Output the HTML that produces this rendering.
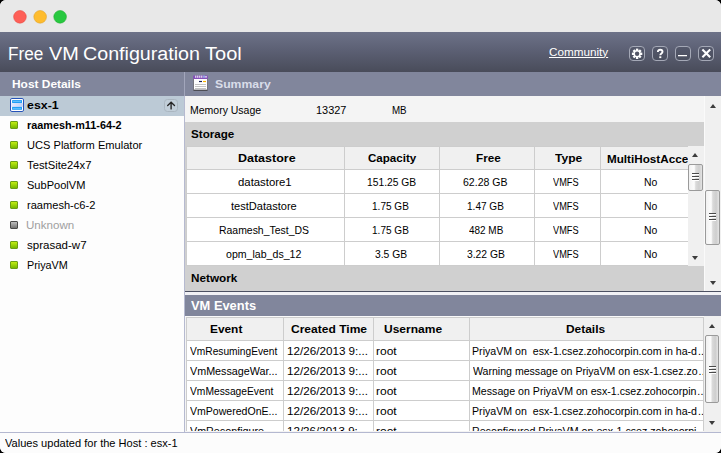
<!DOCTYPE html>
<html>
<head>
<meta charset="utf-8">
<title>Free VM Configuration Tool</title>
<style>
*{box-sizing:border-box;margin:0;padding:0}
html,body{width:721px;height:453px;overflow:hidden;background:#000;font-family:"Liberation Sans",sans-serif;font-size:11px;color:#000}
#win{position:absolute;left:0;top:0;width:721px;height:453px;background:#fdfdfd;border-radius:6px;overflow:hidden}
#win div,#win i,#win svg{position:absolute;display:block}
.t{position:absolute;white-space:pre;transform-origin:0 0;line-height:14px;height:14px}
.tl{top:10.4px;width:13px;height:13px;border-radius:50%}
#hdr{left:0;top:32px;width:721px;height:40px;background:linear-gradient(#6d7288,#5c6074 45%,#494c5a)}
.hb{top:14px;width:16px;height:15px;border:1px solid #a4a8b6;border-radius:4px;background:rgba(40,42,56,.18)}
.dot{left:10px;width:8px;height:8px;border:1px solid #6c9e14;background:linear-gradient(#c2ec14,#a0d608 45%,#76b600);border-radius:1px}
.dot.g{border-color:#4a4a4a;background:linear-gradient(#bebebe,#747474)}
.hl{height:1px;background:#cdcdcd}
.vl{width:1px;background:#cdcdcd}
.sb{background:#f0f0f0}
.thumb{border:1px solid #9a9a9a;border-radius:2px;background:linear-gradient(90deg,#f1f1f1 0,#fcfcfc 40%,#dadada 52%,#cecece 78%,#e4e4e4 100%)}
.grip{left:3px;width:7px;height:1.3px;background:#4a4a4a;box-shadow:0 1px 0 #fff}
.arr{width:0;height:0;border-left:3.7px solid transparent;border-right:3.7px solid transparent}
.arr.up{border-bottom:4px solid #3c3c3c}
.arr.dn{border-top:4px solid #3c3c3c}
</style>
</head>
<body>
<div id="win">
  <div style="left:0;top:0;width:721px;height:32px;background:#e8e8e8">
    <svg width="80" height="32" viewBox="0 0 80 32" style="left:0;top:0"><circle cx="19.95" cy="16.85" r="6.3" fill="#fe5f57" stroke="#e5483f" stroke-width=".6"/><circle cx="40.15" cy="16.85" r="6.3" fill="#febc2e" stroke="#e0a227" stroke-width=".6"/><circle cx="60.1" cy="16.85" r="6.3" fill="#28c840" stroke="#1eae2e" stroke-width=".6"/></svg>
  </div>
  <div id="hdr">
    <div class="hb" style="left:629px"><svg width="14" height="13" viewBox="0 0 14 13" style="left:0;top:0"><g transform="translate(7.1,6.8)" fill="#fff"><circle r="3.5"/><g id="teeth"><rect x="-1.2" y="-5.2" width="2.4" height="10.4"/><rect x="-1.2" y="-5.2" width="2.4" height="10.4" transform="rotate(45)"/><rect x="-1.2" y="-5.2" width="2.4" height="10.4" transform="rotate(90)"/><rect x="-1.2" y="-5.2" width="2.4" height="10.4" transform="rotate(135)"/></g><circle r="2.2" fill="#525566"/></g></svg></div>
    <div class="hb" style="left:652px"><svg width="14" height="13" viewBox="0 0 14 13" style="left:0;top:0"><path d="M4.9 4.9 C4.9 3.3 5.9 2.8 7.2 2.8 C8.6 2.8 9.5 3.6 9.5 4.8 C9.5 6.5 7.3 6.5 7.3 8.3" stroke="#fff" stroke-width="1.9" fill="none"/><rect x="6.3" y="9.3" width="2" height="1.8" fill="#fff"/></svg></div>
    <div class="hb" style="left:675px"><div style="left:1.8px;top:7.6px;width:9px;height:1.8px;background:#fff;box-shadow:0 1px 0 rgba(255,255,255,.25)"></div></div>
    <div class="hb" style="left:698px"><svg width="14" height="13" viewBox="0 0 14 13" style="left:0;top:0"><path d="M3.4 2.5 L11.2 10.3 M11.2 2.5 L3.4 10.3" stroke="#fff" stroke-width="2.1" fill="none"/></svg></div>
  </div>
  <div style="left:0;top:72px;width:721px;height:24px;background:#81869c"></div>
  <div style="left:184px;top:72px;width:1px;height:24px;background:#a2a6bb"></div>
  <svg width="15" height="16" viewBox="0 0 15 16" style="left:193px;top:75px">
    <rect x="0.5" y="3.5" width="14" height="11.5" fill="#fff" stroke="#77777f" stroke-width="1"/>
    <rect x="0.5" y="15" width="14" height="1" fill="#4c4c54"/>
    <rect x="0" y="0.6" width="15" height="3.4" rx="1" fill="#8450b8"/>
    <g fill="#fff"><rect x="2.3" y="0.6" width="1" height="2.2"/><rect x="4.3" y="0.6" width="1" height="2.2"/><rect x="6.3" y="0.6" width="1" height="2.2"/><rect x="8.3" y="0.6" width="1" height="2.2"/><rect x="10.3" y="0.6" width="1.4" height="2.2" fill="#9fc8ff"/><rect x="12" y="1.4" width="2" height="1" /></g>
    <rect x="6" y="5.9" width="3" height="1.2" fill="#1c2458"/><rect x="10" y="5.9" width="3" height="1.2" fill="#f8b400"/>
    <rect x="2" y="9" width="11" height="1" fill="#c4c4c4"/><rect x="2" y="11" width="11" height="1" fill="#c4c4c4"/><rect x="2" y="13" width="11" height="1" fill="#c4c4c4"/>
  </svg>
  <!-- left -->
  <div style="left:0;top:96px;width:184px;height:20px;background:#bccad6"></div>
  <svg width="14" height="14" viewBox="0 0 14 14" style="left:10px;top:98px">
    <defs><linearGradient id="eg" x1="0" y1="0" x2="1" y2="0"><stop offset="0" stop-color="#e6eafe"/><stop offset="1" stop-color="#bfd1f8"/></linearGradient></defs>
    <rect x="0.5" y="0.5" width="13" height="13" rx="1.4" fill="#fff" stroke="#2552b8"/>
    <rect x="1.3" y="4.9" width="11.4" height="4.1" fill="url(#eg)"/>
    <rect x="2.1" y="2.1" width="9.9" height="2.9" fill="#1f9ef5"/><rect x="3" y="3.15" width="8" height="0.8" fill="#70c6ff"/>
    <rect x="2.1" y="8.9" width="9.9" height="2.9" fill="#1f9ef5"/><rect x="3" y="9.95" width="8" height="0.8" fill="#70c6ff"/>
  </svg>
  <div style="left:164px;top:99px;width:14px;height:13px;border:1px solid #aab6c0;border-radius:3.5px;background:#c1ced9"></div>
  <svg width="14" height="13" viewBox="0 0 14 13" style="left:164px;top:99px"><path d="M7.1 3.6 V9.9 M3.7 6.5 L7.1 3.3 L10.5 6.5" stroke="#242424" stroke-width="1.35" fill="none" stroke-linecap="round" stroke-linejoin="miter"/></svg>
  <i class="dot" style="top:121px"></i><i class="dot" style="top:141px"></i><i class="dot" style="top:161px"></i><i class="dot" style="top:181px"></i><i class="dot" style="top:201px"></i><i class="dot g" style="top:221px"></i><i class="dot" style="top:241px"></i><i class="dot" style="top:261px"></i>
  <!-- right -->
  <div style="left:185px;top:96px;width:536px;height:336px;background:#f4f4f4"></div>
  <div style="left:184px;top:96px;width:1px;height:336px;background:#b6bad0"></div>
  <div style="left:185px;top:122px;width:519px;height:24px;background:#d0d0d0"></div>
  <div style="left:185px;top:266px;width:519px;height:25px;background:#d0d0d0"></div>
  <div style="left:185px;top:146px;width:2px;height:120px;background:#d0d0d0"></div>
  <!-- table 1 -->
  <div style="left:186px;top:146px;width:502px;height:120px;background:#fff;overflow:hidden">
    <div style="left:0;top:0;width:502px;height:23px;background:#f0f0f0"></div>
    <div class="hl" style="left:0;top:0;width:502px"></div>
    <div class="hl" style="left:0;top:23px;width:502px"></div><div class="hl" style="left:0;top:47px;width:502px"></div><div class="hl" style="left:0;top:71px;width:502px"></div><div class="hl" style="left:0;top:95px;width:502px"></div><div class="hl" style="left:0;top:119px;width:502px"></div>
    <div class="vl" style="left:0;top:0;height:120px"></div><div class="vl" style="left:158px;top:0;height:120px"></div><div class="vl" style="left:253px;top:0;height:120px"></div><div class="vl" style="left:348px;top:0;height:120px"></div><div class="vl" style="left:414px;top:0;height:120px"></div>
    <span class="t" style="left:420.6px;top:5.5px;font-weight:bold;transform:scaleX(1.062)">MultiHostAccess</span>
  </div>
  <div class="sb" style="left:688px;top:146px;width:16px;height:120px">
    <i class="arr up" style="left:4px;top:7px"></i>
    <div class="thumb" style="left:0;top:18px;width:14.5px;height:26.5px"><i class="grip" style="top:8px"></i><i class="grip" style="top:11px"></i><i class="grip" style="top:14px"></i></div>
    <i class="arr dn" style="left:4px;top:110px"></i>
  </div>
  <div class="sb" style="left:704px;top:96px;width:17px;height:195px">
    <i class="arr up" style="left:5.5px;top:7.5px"></i>
    <div class="thumb" style="left:1px;top:94px;width:15px;height:54.5px"><i class="grip" style="top:22px"></i><i class="grip" style="top:25px"></i><i class="grip" style="top:28px"></i></div>
    <i class="arr dn" style="left:5.5px;top:185px"></i>
  </div>
  <div style="left:704px;top:96px;width:1px;height:195px;background:#fafafa"></div>
  <div style="left:185px;top:291px;width:536px;height:1px;background:#4c5062"></div>
  <div style="left:185px;top:292px;width:536px;height:3px;background:#f1f1f5"></div>
  <div style="left:185px;top:295px;width:536px;height:21px;background:#81869c"></div>
  <!-- table 2 -->
  <div style="left:185px;top:316px;width:519px;height:1px;background:#fafafa"></div>
  <div style="left:186px;top:317px;width:518px;height:114px;background:#fff;overflow:hidden">
    <div style="left:0;top:0;width:518px;height:23px;background:#f0f0f0"></div>
    <div class="hl" style="left:0;top:0;width:518px"></div>
    <div class="hl" style="left:0;top:23px;width:518px"></div><div class="hl" style="left:0;top:43px;width:518px"></div><div class="hl" style="left:0;top:63px;width:518px"></div><div class="hl" style="left:0;top:83px;width:518px"></div><div class="hl" style="left:0;top:103px;width:518px"></div>
    <div class="vl" style="left:0;top:0;height:115px"></div><div class="vl" style="left:97px;top:0;height:115px"></div><div class="vl" style="left:187px;top:0;height:115px"></div><div class="vl" style="left:283px;top:0;height:115px"></div><div class="vl" style="left:517px;top:0;height:115px"></div>
    <div style="left:1px;top:24px;width:516px;height:90px;overflow:hidden">
<span class="t" style="left:3.0px;top:2.7px;transform:scaleX(0.9271);">VmResumingEvent</span>
<span class="t" style="left:99.8px;top:2.7px;transform:scaleX(1.0601);">12/26/2013 9:...</span>
<span class="t" style="left:189.1px;top:2.7px;transform:scaleX(1.0911);">root</span>
<span class="t" style="left:285.4px;top:2.7px;transform:scaleX(0.9660);">PriyaVM on  esx-1.csez.zohocorpin.com in ha-d<span style="margin-left:.9px;letter-spacing:.3px">...</span></span>
<span class="t" style="left:3.0px;top:22.7px;transform:scaleX(0.9778);">VmMessageWar...</span>
<span class="t" style="left:99.8px;top:22.7px;transform:scaleX(1.0601);">12/26/2013 9:...</span>
<span class="t" style="left:189.1px;top:22.7px;transform:scaleX(1.0911);">root</span>
<span class="t" style="left:285.7px;top:22.7px;transform:scaleX(0.9607);">Warning message on PriyaVM on esx-1.csez.zo<span style="margin-left:.9px;letter-spacing:.3px">...</span></span>
<span class="t" style="left:3.0px;top:42.7px;transform:scaleX(0.9324);">VmMessageEvent</span>
<span class="t" style="left:99.8px;top:42.7px;transform:scaleX(1.0601);">12/26/2013 9:...</span>
<span class="t" style="left:189.1px;top:42.7px;transform:scaleX(1.0911);">root</span>
<span class="t" style="left:285.4px;top:42.7px;transform:scaleX(0.9660);">Message on PriyaVM on esx-1.csez.zohocorpin<span style="margin-left:.9px;letter-spacing:.3px">...</span></span>
<span class="t" style="left:3.0px;top:62.7px;transform:scaleX(0.9591);">VmPoweredOnE...</span>
<span class="t" style="left:99.8px;top:62.7px;transform:scaleX(1.0601);">12/26/2013 9:...</span>
<span class="t" style="left:189.1px;top:62.7px;transform:scaleX(1.0911);">root</span>
<span class="t" style="left:285.4px;top:62.7px;transform:scaleX(0.9660);">PriyaVM on  esx-1.csez.zohocorpin.com in ha-d<span style="margin-left:.9px;letter-spacing:.3px">...</span></span>
<span class="t" style="left:3.0px;top:82.7px;transform:scaleX(0.9762);">VmReconfigure...</span>
<span class="t" style="left:99.8px;top:82.7px;transform:scaleX(1.0527);">12/26/2013 9:...</span>
<span class="t" style="left:189.1px;top:82.7px;transform:scaleX(1.0911);">root</span>
<span class="t" style="left:285.4px;top:82.7px;transform:scaleX(0.9687);">Reconfigured PriyaVM on esx-1.csez.zohocorpi<span style="margin-left:.9px;letter-spacing:.3px">...</span></span>
    </div>
  </div>
  <div class="sb" style="left:704px;top:316px;width:17px;height:116px">
    <i class="arr up" style="left:4.5px;top:8px"></i>
    <div class="thumb" style="left:0.5px;top:19px;width:14px;height:68px"><i class="grip" style="top:30px"></i><i class="grip" style="top:33px"></i><i class="grip" style="top:36px"></i></div>
    <i class="arr dn" style="left:4.5px;top:105px"></i>
  </div>
  <!-- status -->
  <div style="left:0;top:432px;width:721px;height:21px;background:#fcfcfc;border-top:1px solid #b4b8d0"></div>
<span class="t" style="left:8.0px;top:42.8px;transform:scaleX(0.9543);font-size:18px;line-height:22px;color:#fff;">Free</span>
<span class="t" style="left:48.5px;top:42.8px;transform:scaleX(1.1038);font-size:18px;line-height:22px;color:#fff;">VM</span>
<span class="t" style="left:82.9px;top:42.8px;transform:scaleX(1.0924);font-size:18px;line-height:22px;color:#fff;">Configuration</span>
<span class="t" style="left:204.9px;top:42.8px;transform:scaleX(1.1125);font-size:18px;line-height:22px;color:#fff;">Tool</span>
<span class="t" style="left:549.1px;top:44.6px;transform:scaleX(1.0639);color:#fff;text-decoration:underline;">Community</span>
<span class="t" style="left:11.8px;top:77.2px;transform:scaleX(1.0831);font-weight:bold;color:#fff;">Host Details</span>
<span class="t" style="left:214.5px;top:77.2px;transform:scaleX(1.1106);font-weight:bold;color:#d9dde9;">Summary</span>
<span class="t" style="left:27.0px;top:98.0px;transform:scaleX(1.1246);font-weight:bold;">esx-1</span>
<span class="t" style="left:26.7px;top:118.0px;transform:scaleX(0.9857);font-weight:bold;">raamesh-m11-64-2</span>
<span class="t" style="left:26.7px;top:138.0px;transform:scaleX(1.0085);">UCS Platform Emulator</span>
<span class="t" style="left:27.0px;top:158.0px;transform:scaleX(1.0237);">TestSite24x7</span>
<span class="t" style="left:26.7px;top:178.0px;transform:scaleX(1.0050);">SubPoolVM</span>
<span class="t" style="left:26.7px;top:198.0px;transform:scaleX(1.0065);">raamesh-c6-2</span>
<span class="t" style="left:25.9px;top:218.0px;transform:scaleX(1.0527);color:#a0a0a0;">Unknown</span>
<span class="t" style="left:26.7px;top:238.0px;transform:scaleX(1.0476);">sprasad-w7</span>
<span class="t" style="left:26.7px;top:258.0px;transform:scaleX(0.9820);">PriyaVM</span>
<span class="t" style="left:189.7px;top:102.8px;transform:scaleX(0.9534);">Memory Usage</span>
<span class="t" style="left:315.5px;top:102.8px;transform:scaleX(0.9934);">13327</span>
<span class="t" style="left:392.1px;top:102.8px;transform:scaleX(0.8867);">MB</span>
<span class="t" style="left:191.3px;top:126.8px;transform:scaleX(1.0571);font-weight:bold;">Storage</span>
<span class="t" style="left:191.1px;top:270.8px;transform:scaleX(1.0664);font-weight:bold;">Network</span>
<span class="t" style="left:191.3px;top:298.8px;transform:scaleX(1.0723);font-size:12px;line-height:14px;font-weight:bold;color:#fff;">VM Events</span>
<span class="t" style="left:237.6px;top:151.0px;transform:scaleX(1.1347);font-weight:bold;">Datastore</span>
<span class="t" style="left:368.0px;top:151.0px;transform:scaleX(1.0509);font-weight:bold;">Capacity</span>
<span class="t" style="left:475.5px;top:151.0px;transform:scaleX(1.0659);font-weight:bold;">Free</span>
<span class="t" style="left:554.7px;top:151.0px;transform:scaleX(1.0936);font-weight:bold;">Type</span>
<span class="t" style="left:237.5px;top:174.8px;transform:scaleX(1.0320);">datastore1</span>
<span class="t" style="left:366.6px;top:174.8px;transform:scaleX(0.9337);">151.25 GB</span>
<span class="t" style="left:463.4px;top:174.8px;transform:scaleX(0.9584);">62.28 GB</span>
<span class="t" style="left:553.1px;top:174.8px;transform:scaleX(0.8383);">VMFS</span>
<span class="t" style="left:643.8px;top:174.8px;transform:scaleX(0.9462);">No</span>
<span class="t" style="left:231.3px;top:198.6px;transform:scaleX(1.0049);">testDatastore</span>
<span class="t" style="left:372.3px;top:198.6px;transform:scaleX(0.9133);">1.75 GB</span>
<span class="t" style="left:467.1px;top:198.6px;transform:scaleX(0.9133);">1.47 GB</span>
<span class="t" style="left:553.1px;top:198.6px;transform:scaleX(0.8383);">VMFS</span>
<span class="t" style="left:643.8px;top:198.6px;transform:scaleX(0.9462);">No</span>
<span class="t" style="left:219.1px;top:222.6px;transform:scaleX(0.9490);">Raamesh_Test_DS</span>
<span class="t" style="left:372.3px;top:222.6px;transform:scaleX(0.9133);">1.75 GB</span>
<span class="t" style="left:469.0px;top:222.6px;transform:scaleX(0.9046);">482 MB</span>
<span class="t" style="left:553.1px;top:222.6px;transform:scaleX(0.8383);">VMFS</span>
<span class="t" style="left:643.8px;top:222.6px;transform:scaleX(0.9462);">No</span>
<span class="t" style="left:226.2px;top:246.5px;transform:scaleX(0.9627);">opm_lab_ds_12</span>
<span class="t" style="left:375.1px;top:246.5px;transform:scaleX(0.9388);">3.5 GB</span>
<span class="t" style="left:466.8px;top:246.5px;transform:scaleX(0.9395);">3.22 GB</span>
<span class="t" style="left:553.1px;top:246.5px;transform:scaleX(0.8383);">VMFS</span>
<span class="t" style="left:643.8px;top:246.5px;transform:scaleX(0.9462);">No</span>
<span class="t" style="left:209.6px;top:322.0px;transform:scaleX(1.0793);font-weight:bold;">Event</span>
<span class="t" style="left:291.2px;top:322.0px;transform:scaleX(1.0941);font-weight:bold;">Created Time</span>
<span class="t" style="left:383.6px;top:322.0px;transform:scaleX(1.0921);font-weight:bold;">Username</span>
<span class="t" style="left:566.0px;top:322.0px;transform:scaleX(1.0851);font-weight:bold;">Details</span>
<span class="t" style="left:5.2px;top:435.7px;transform:scaleX(1.0058);">Values updated for the Host : esx-1</span>
</div>
</body>
</html>
